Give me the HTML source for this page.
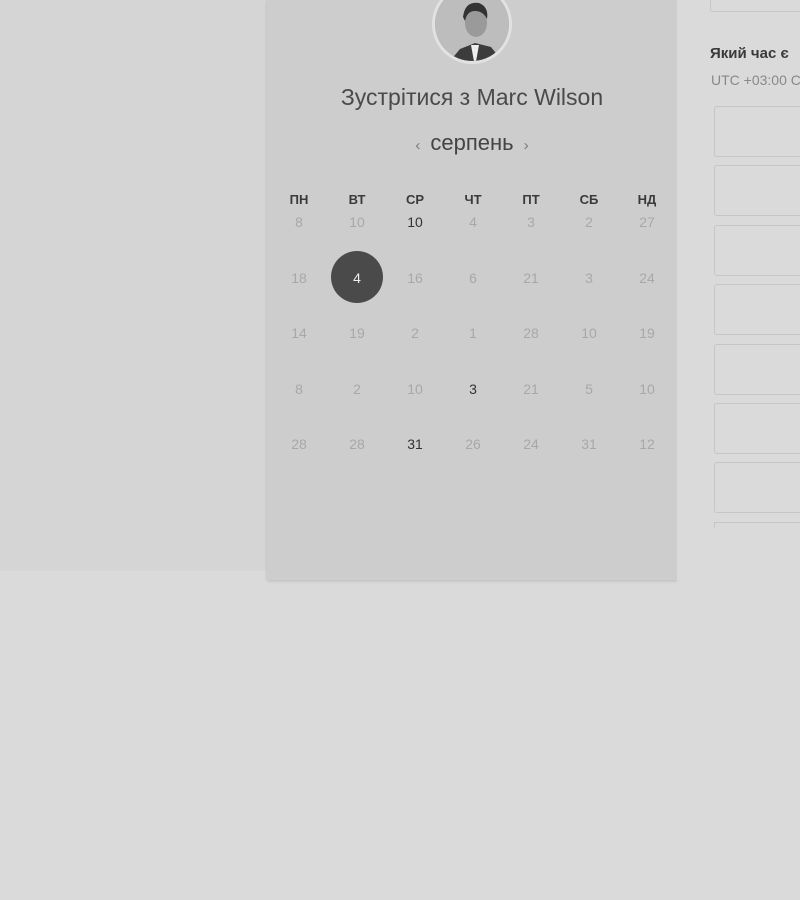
<!DOCTYPE html>
<html><head><meta charset="utf-8"><style>
*{margin:0;padding:0;box-sizing:border-box}
body{width:800px;height:900px;background:#dadada;position:relative;overflow:hidden;font-family:"Liberation Sans","DejaVu Sans",sans-serif}
.left{position:absolute;left:0;top:0;width:267px;height:571px;background:#d5d5d5}
.panel{position:absolute;left:267px;top:0;width:410px;height:580px;background:#cdcdcd;box-shadow:0 1px 3px rgba(0,0,0,.15)}
.right{position:absolute;left:677px;top:0;width:123px;height:580px;background:#dadada}
.av{position:absolute;left:432px;top:-16px;width:80px;height:80px;border-radius:50%;background:#b8b8b8;border:3px solid #e2e2e2;overflow:hidden}
.t{position:absolute;left:267px;width:410px;text-align:center;color:#444}
.box{position:absolute;left:714px;width:100px;height:51px;border:1px solid #c6c6c6;border-right:none;border-radius:3px 0 0 3px}
.d{position:absolute;width:40px;text-align:center;font-size:14px;color:#a8a8a8}
.h{position:absolute;width:40px;text-align:center;font-size:13px;font-weight:bold;color:#3a3a3a}
</style></head><body>
<div class="left"></div>
<div class="panel"></div>
<div class="right"></div>
<div class="av"><svg width="80" height="80" viewBox="0 0 80 80"><rect width="80" height="80" fill="#bdbdbd"/><path d="M10 80 L25 62 L40 56 L56 60 L72 80Z" fill="#3c3c3c"/><path d="M36 58 L40 80 L44 58Z" fill="#eee"/><ellipse cx="41" cy="36" rx="11" ry="14" fill="#9a9a9a"/><path d="M28 30 Q30 14 44 16 Q54 20 52 32 Q48 24 40 24 Q32 24 30 34Z" fill="#333"/></svg></div>
<div class="t" style="top:84px;font-size:23px;color:#4a4a4a">Зустрітися з Marc Wilson</div>
<div class="t" style="top:130px;font-size:22px"><span style="font-size:15px;color:#777;margin-right:10px">‹</span>серпень<span style="font-size:15px;color:#777;margin-left:10px">›</span></div>
<div class="h" style="left:279px;top:192px">ПН</div><div class="h" style="left:337px;top:192px">ВТ</div><div class="h" style="left:395px;top:192px">СР</div><div class="h" style="left:453px;top:192px">ЧТ</div><div class="h" style="left:511px;top:192px">ПТ</div><div class="h" style="left:569px;top:192px">СБ</div><div class="h" style="left:627px;top:192px">НД</div>
<div style="position:absolute;left:331px;top:251px;width:52px;height:52px;border-radius:50%;background:#4a4a4a"></div>
<div id="g"></div>
<script>
var rows=[["8","10","10*","4","3","2","27"],["18","4w","16","6","21","3","24"],["14","19","2","1","28","10","19"],["8","2","10","3*","21","5","10"],["28","28","31*","26","24","31","12"]];
var ys=[214,270,325,381,436],xs=[279,337,395,453,511,569,627],h="";
rows.forEach(function(r,i){r.forEach(function(v,j){var c="#a8a8a8";if(v.slice(-1)=="*"){c="#333";v=v.slice(0,-1)}if(v.slice(-1)=="w"){c="#eee";v=v.slice(0,-1)}h+='<div class="d" style="left:'+xs[j]+'px;top:'+ys[i]+'px;color:'+c+'">'+v+'</div>'})});
document.getElementById("g").innerHTML=h;
</script>
<div style="position:absolute;left:710px;top:-10px;width:100px;height:22px;border:1px solid #c6c6c6;border-right:none;border-radius:3px"></div>
<div style="position:absolute;left:710px;top:45px;font-size:15px;font-weight:bold;color:#3a3a3a;white-space:nowrap">Який час є</div>
<div style="position:absolute;left:711px;top:72px;font-size:14px;color:#888;white-space:nowrap">UTC +03:00 C</div>
<div class="box" style="top:106px"></div><div class="box" style="top:165px"></div><div class="box" style="top:225px"></div><div class="box" style="top:284px"></div><div class="box" style="top:344px"></div><div class="box" style="top:403px"></div><div class="box" style="top:462px"></div>
<div style="position:absolute;left:714px;top:522px;width:100px;height:6px;border:1px solid #c6c6c6;border-bottom:none;border-right:none"></div>
</body></html>
